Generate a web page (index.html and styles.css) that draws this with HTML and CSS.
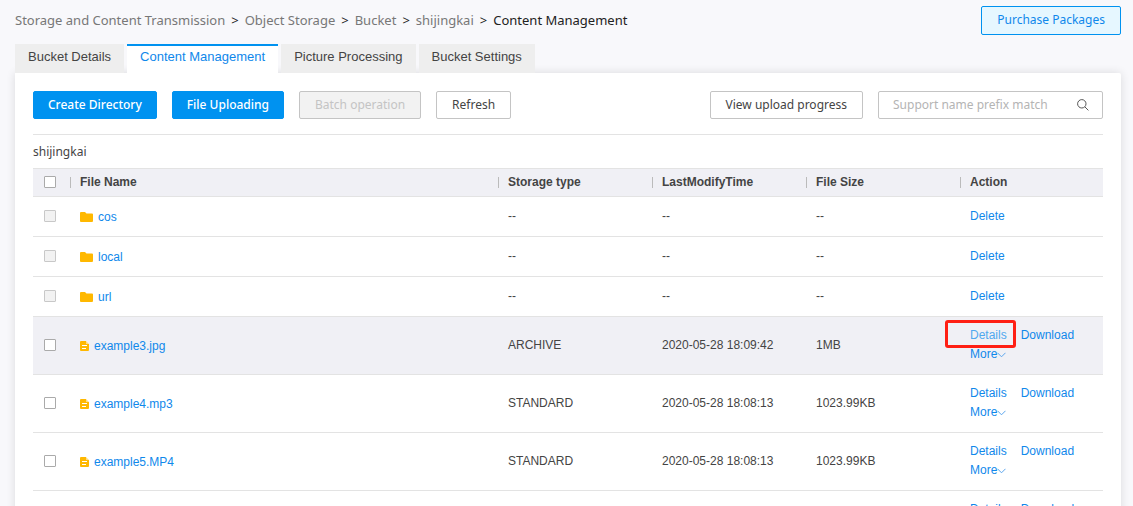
FILE: index.html
```html
<!DOCTYPE html>
<html lang="en">
<head>
<meta charset="UTF-8">
    <title>Content Management</title>
    <link rel="stylesheet" href="styles.css">
</head>
<body>
    <svg class="sprite" aria-hidden="true">
        <symbol id="folder" viewBox="0 0 13 10">
            <path fill="#ffb800" d="M1 0h4l1.500 1.500h5.500a1 1 0 0 1 1 1V9a1 1 0 0 1-1 1H1a1 1 0 0 1-1-1V1a1 1 0 0 1 1-1z"/>
        </symbol>
        <symbol id="file" viewBox="0 0 9 10">
            <path fill="#ffb800" d="M1 0h5v3h3v6a1 1 0 0 1-1 1H1a1 1 0 0 1-1-1V1a1 1 0 0 1 1-1z"/>
            <path fill="#ffdc80" d="M6 0l3 3H6z"/>
            <path stroke="#fff" d="M2 4.500h5M2 7.500h4"/>
        </symbol>
        <symbol id="down" viewBox="0 0 9 6">
            <path fill="none" stroke="#5aa5ee" d="M.5.800l4 4 4-4"/>
        </symbol>
    </svg>

    <div class="header">
        <div class="crumbs">
            <a href="#">Storage and Content Transmission</a><i>&gt;</i><a href="#">Object Storage</a><i>&gt;</i><a href="#">Bucket</a><i>&gt;</i><a href="#">shijingkai</a><i>&gt;</i><span>Content Management</span>
        </div>
        <button type="button" class="btn buy">Purchase Packages</button>
    </div>

    <div class="tabs">
        <a href="#">Bucket Details</a>
        <a href="#" class="active">Content Management</a>
        <a href="#">Picture Processing</a>
        <a href="#">Bucket Settings</a>
    </div>

    <div class="panel">
        <div class="toolbar">
            <button type="button" class="btn primary">Create Directory</button>
            <button type="button" class="btn primary">File Uploading</button>
            <button type="button" class="btn" disabled>Batch operation</button>
            <button type="button" class="btn">Refresh</button>
            <button type="button" class="btn progress">View upload progress</button>
            <div class="search">
                <input type="text" placeholder="Support name prefix match" aria-label="Support name prefix match">
                <button type="button" aria-label="Search">
                    <svg width="12" height="12" viewBox="0 0 12 12"><g fill="none" stroke="#555"><circle cx="4.800" cy="4.800" r="4.200"/><path d="M7.900 7.900l3.500 3.500"/></g></svg>
                </button>
            </div>
        </div>

        <div class="path">shijingkai</div>

        <table class="list">
            <colgroup>
                <col class="c-check"><col><col class="c-info"><col class="c-info"><col class="c-info"><col class="c-action">
            </colgroup>
            <thead>
                <tr>
                    <td class="check"><input type="checkbox" aria-label="Select all"></td>
                    <th>File Name</th>
                    <th>Storage type</th>
                    <th>LastModifyTime</th>
                    <th>File Size</th>
                    <th>Action</th>
                </tr>
            </thead>
            <tbody>
                <tr class="dir">
                    <td class="check"><input type="checkbox" aria-label="cos" disabled></td>
                    <td><a href="#" class="name"><svg width="13" height="10"><use href="#folder"/></svg>cos</a></td>
                    <td>--</td>
                    <td>--</td>
                    <td>--</td>
                    <td><a href="#">Delete</a></td>
                </tr>
                <tr class="dir">
                    <td class="check"><input type="checkbox" aria-label="local" disabled></td>
                    <td><a href="#" class="name"><svg width="13" height="10"><use href="#folder"/></svg>local</a></td>
                    <td>--</td>
                    <td>--</td>
                    <td>--</td>
                    <td><a href="#">Delete</a></td>
                </tr>
                <tr class="dir">
                    <td class="check"><input type="checkbox" aria-label="url" disabled></td>
                    <td><a href="#" class="name"><svg width="13" height="10"><use href="#folder"/></svg>url</a></td>
                    <td>--</td>
                    <td>--</td>
                    <td>--</td>
                    <td><a href="#">Delete</a></td>
                </tr>
                <tr class="file hover">
                    <td class="check"><input type="checkbox" aria-label="example3.jpg"></td>
                    <td><a href="#" class="name"><svg width="9" height="10"><use href="#file"/></svg>example3.jpg</a></td>
                    <td>ARCHIVE</td>
                    <td>2020-05-28 18:09:42</td>
                    <td>1MB</td>
                    <td class="action"><div class="mark"></div><a href="#" class="light">Details</a><a href="#">Download</a><a href="#">More<svg width="9" height="6"><use href="#down"/></svg></a></td>
                </tr>
                <tr class="file">
                    <td class="check"><input type="checkbox" aria-label="example4.mp3"></td>
                    <td><a href="#" class="name"><svg width="9" height="10"><use href="#file"/></svg>example4.mp3</a></td>
                    <td>STANDARD</td>
                    <td>2020-05-28 18:08:13</td>
                    <td>1023.99KB</td>
                    <td class="action"><a href="#">Details</a><a href="#">Download</a><a href="#">More<svg width="9" height="6"><use href="#down"/></svg></a></td>
                </tr>
                <tr class="file">
                    <td class="check"><input type="checkbox" aria-label="example5.MP4"></td>
                    <td><a href="#" class="name"><svg width="9" height="10"><use href="#file"/></svg>example5.MP4</a></td>
                    <td>STANDARD</td>
                    <td>2020-05-28 18:08:13</td>
                    <td>1023.99KB</td>
                    <td class="action"><a href="#">Details</a><a href="#">Download</a><a href="#">More<svg width="9" height="6"><use href="#down"/></svg></a></td>
                </tr>
                <tr class="file">
                    <td></td>
                    <td></td>
                    <td></td>
                    <td></td>
                    <td></td>
                    <td class="action"><a href="#">Details</a><a href="#">Download</a><a href="#">More<svg width="9" height="6"><use href="#down"/></svg></a></td>
                </tr>
            </tbody>
        </table>
    </div>
</body>
</html>
```

FILE: styles.css
```css
* { box-sizing: border-box; }

body {
    margin: 0;
    padding: 0 12px 0 15px;
    height: 100vh;
    overflow: hidden;
    background: #f8f8fb;
    color: #444;
    font: 12px/18px "Liberation Sans", Arial, sans-serif;
}

a { color: #0f88eb; text-decoration: none; }

.sprite { display: none; }

/* header */
.header {
    display: flex;
    justify-content: space-between;
    align-items: center;
    height: 44px;
    padding-bottom: 4px;
    font-family: "Noto Sans", "Open Sans", sans-serif;
}
.crumbs { font-size: 13px; color: #222; white-space: nowrap; }
.crumbs a { color: #777; }
.crumbs i { margin: 0 6px; font-style: normal; }

.btn {
    height: 28px;
    padding: 0 15px;
    border: 1px solid #c4c4c4;
    border-radius: 2px;
    background: #fff;
    color: #444;
    font: 12px/18px "Noto Sans", "Open Sans", sans-serif;
    white-space: nowrap;
    cursor: pointer;
}
.btn.primary { padding: 0 14px; border-color: #0092f0; background: #0092f0; color: #fff; font-weight: 500; }
.btn.buy { height: 29px; border-color: #0092f0; background: #e6f7ff; color: #0f88eb; }
.btn:disabled { background: #f2f2f2; color: #c4c4c4; cursor: default; }

/* tabs */
.tabs { position: relative; z-index: 1; display: flex; gap: 3px; font-size: 13px; }
.tabs a {
    height: 29px;
    padding: 2px 13px 0;
    border-top: 2px solid #eee;
    background: #eee;
    color: #444;
    white-space: nowrap;
}
.tabs .active { border-color: #0092f0; background: #fff; color: #0f88eb; }

.panel {
    min-height: 100%;
    padding: 18px;
    border-radius: 0 2px 0 0;
    background: #fff;
    box-shadow: 0 0 10px rgba(0, 0, 0, .12);
}

.toolbar {
    display: flex;
    gap: 15px;
    padding-bottom: 15px;
    border-bottom: 1px solid #e3e3e3;
}
.toolbar .progress { margin-left: auto; }
.search {
    display: flex;
    align-items: center;
    width: 225px;
    height: 28px;
    border: 1px solid #c4c4c4;
    border-radius: 2px;
}
.search input {
    width: 170px;
    padding: 0 0 0 14px;
    border: 0;
    outline: none;
    background: none;
    font: 12px/18px "Noto Sans", "Open Sans", sans-serif;
}
.search input::placeholder { color: #b4b4b4; }
.search button {
    display: flex;
    margin: 0 13px 0 auto;
    padding: 0;
    border: 0;
    background: none;
    cursor: pointer;
}

.path {
    padding: 8px 0 7px;
    font: 12px/18px "Noto Sans", "Open Sans", sans-serif;
}

/* list */
.list { width: 100%; table-layout: fixed; border-collapse: separate; border-spacing: 0; }
.c-check { width: 37px; }
.c-info { width: 154px; }
.c-action { width: 143px; }

.list th, .list td { padding: 0 0 2px 10px; border-bottom: 1px solid #e3e3e3; text-align: left; }
.list thead th, .list thead td { height: 29px; border-top: 1px solid #e3e3e3; background: #f0f0f5; }
.list thead th { background: linear-gradient(#bbb, #bbb) 0 8px / 1px 11px no-repeat #f0f0f5; }
.list .dir td { height: 40px; }
.list .file td { height: 58px; }
.list .hover td { background: #f0f0f5; }

.check input {
    display: block;
    appearance: none;
    width: 12px;
    height: 12px;
    margin: 0 0 0 1px;
    border: 1px solid #aaa;
    border-radius: 1px;
    background: #fff;
}
.check input:disabled { border-color: #c8c8c8; background: #f2f2f2; }

.name { display: flex; align-items: center; gap: 5px; padding-top: 3px; }

.list .action { position: relative; line-height: 19px; }
.action a { display: inline-block; margin-right: 14px; }
.action .light { color: #4fa8ef; }

/* red frame round the Details link */
.mark {
    position: absolute;
    top: 3px;
    left: -15px;
    width: 71px;
    height: 28px;
    border: 3px solid #ff1f14;
    border-radius: 3px;
}
```
